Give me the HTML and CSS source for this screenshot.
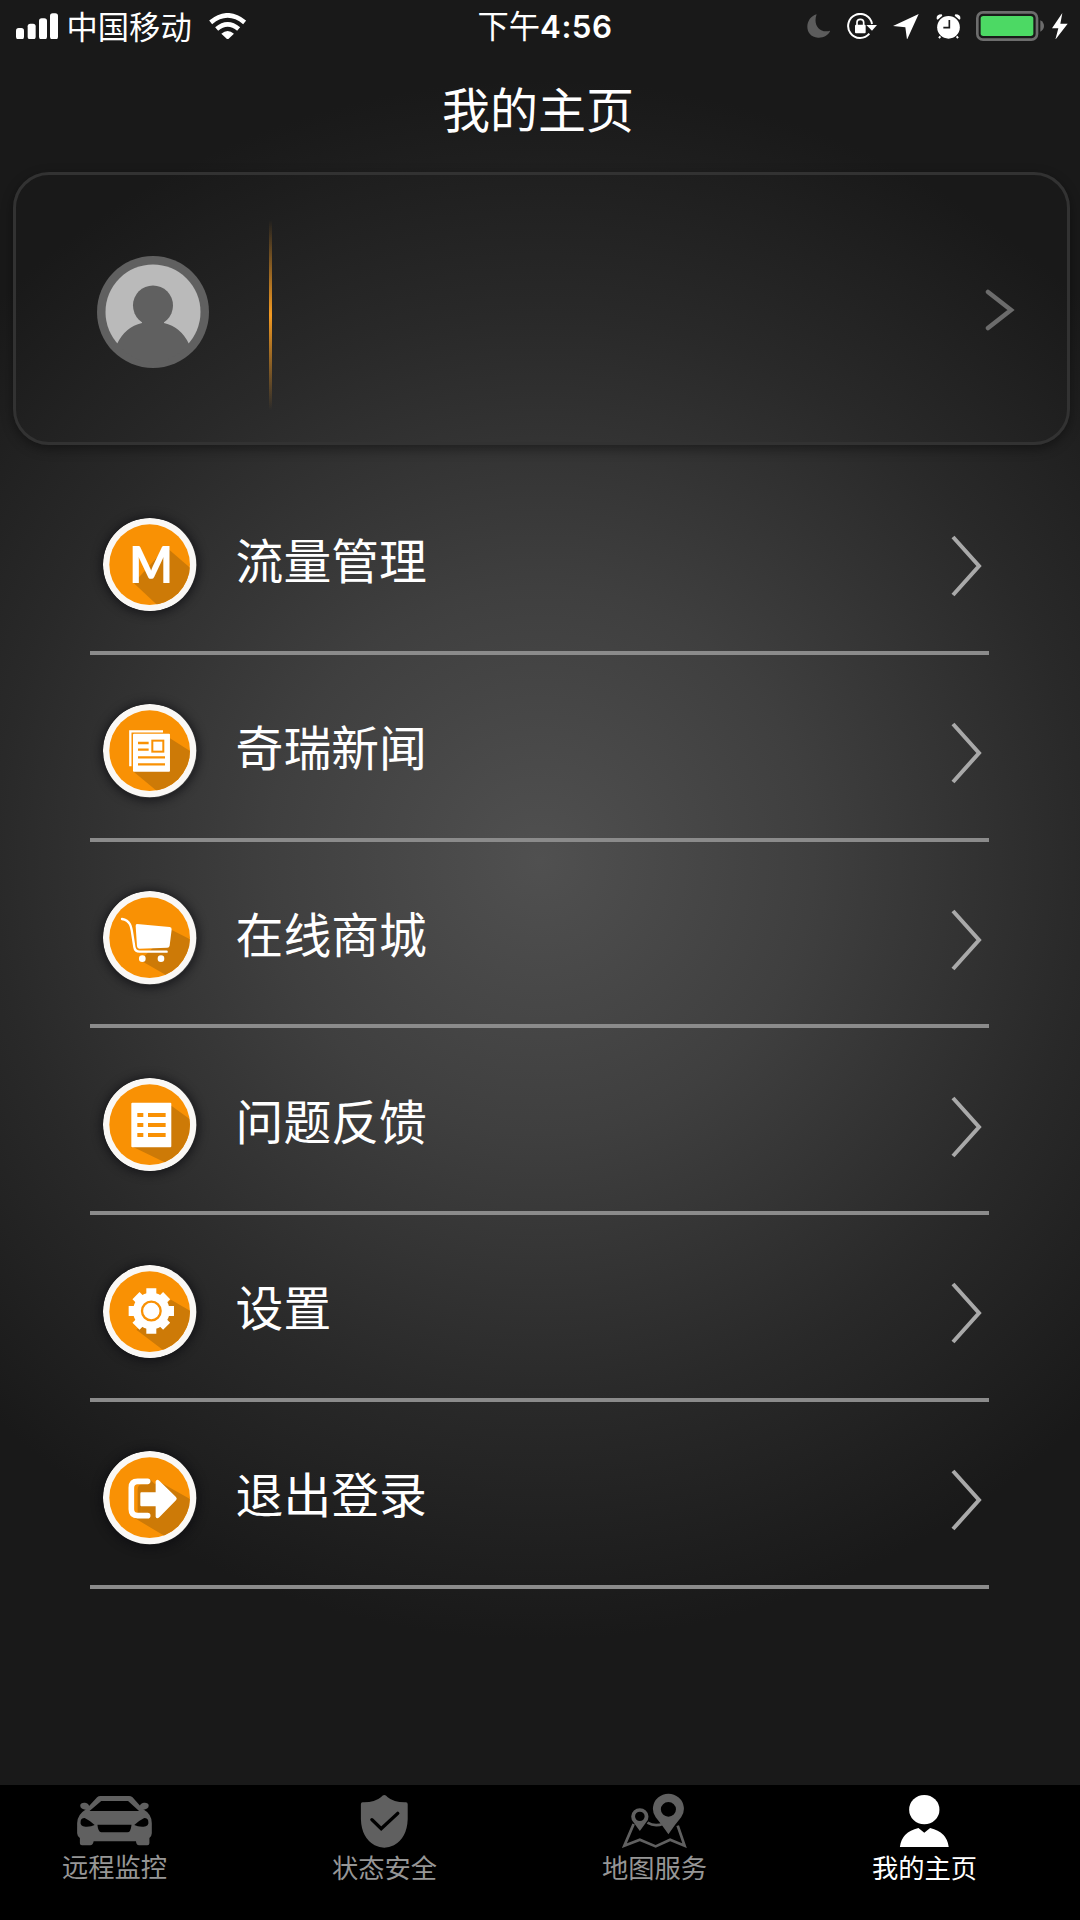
FILE: index.html
```
<!DOCTYPE html>
<html lang="zh-CN">
<head>
    <meta charset="UTF-8">
    <title>我的主页</title>
    <link rel="stylesheet" href="styles.css">
</head>
<body>
    <div class="page">
        <div class="status">
            <div class="status_left">
                <svg class="signal" viewBox="0 0 126 80" fill="#fff">
                    <rect x="0" y="45" width="24" height="34" rx="8"/>
                    <rect x="35" y="32" width="24" height="47" rx="8"/>
                    <rect x="69" y="16" width="24" height="63" rx="8"/>
                    <rect x="102" y="1" width="24" height="78" rx="8"/>
                </svg>
                <span class="carrier">中国移动</span>
                <svg class="wifi" viewBox="0 0 112 80" fill="none" stroke="#fff" stroke-width="14">
                    <path d="M5 28Q56 -14 107 28"/>
                    <path d="M23 48Q56 20 89 48"/>
                    <path d="M56 80L37 62Q56 46 75 62Z" fill="#fff" stroke="none"/>
                </svg>
            </div>
            <div class="time">下午<b>4:56</b></div>
            <div class="status_right">
                <svg class="moon" viewBox="0 0 70 80">
                    <path d="M29 4C-8 14 -10 72 33 74C50 75 64 67 70 53C38 62 17 35 29 4Z" fill="#5c5c5c"/>
                </svg>
                <svg class="lock" viewBox="0 0 90 80">
                    <path d="M67 62A36 36 0 1 1 75 33" fill="none" stroke="#fff" stroke-width="6"/>
                    <path d="M58 36H90L75 53Z" fill="#fff"/>
                    <rect x="24" y="35" width="32" height="26" rx="3" fill="#fff"/>
                    <path d="M30 36V28Q30 19 40 19Q50 19 50 28V36" fill="none" stroke="#fff" stroke-width="5"/>
                </svg>
                <svg class="arrow" viewBox="0 0 77 80">
                    <path d="M77 3L0 39L37 43L42 80Z" fill="#fff"/>
                </svg>
                <svg class="alarm" viewBox="0 0 75 80">
                    <path d="M2 18Q0 4 17 4L19 8L5 20ZM73 18Q75 4 58 4L56 8L70 20Z" fill="#fff"/>
                    <circle cx="37.500" cy="43" r="34" fill="#fff"/>
                    <path d="M40 21V44H22" fill="none" stroke="#1a1a1a" stroke-width="5"/>
                    <path d="M13 70L9 75M62 70L66 75" stroke="#fff" stroke-width="6"/>
                </svg>
                <svg class="battery" viewBox="0 0 204 90">
                    <rect x="4" y="4" width="179" height="82" rx="17" fill="none" stroke="#6d6d6d" stroke-width="8"/>
                    <rect x="14" y="15" width="158" height="60" rx="8" fill="#4cd964"/>
                    <path d="M193 28Q204 34 204 45Q204 56 193 62Z" fill="#6d6d6d"/>
                </svg>
                <svg class="bolt" viewBox="0 0 47 80">
                    <path d="M31 0L0 46H19L10 80L47 32H25Z" fill="#fff"/>
                </svg>
            </div>
        </div>

        <h1 class="title">我的主页</h1>

        <div class="card">
            <svg class="avatar" viewBox="0 0 112 112">
                <circle cx="56" cy="56" r="56" fill="#606060"/>
                <circle cx="56" cy="56" r="47.500" fill="#bababa"/>
                <circle cx="56" cy="49.500" r="20" fill="#606060"/>
                <path d="M20 88Q28 71 45 67V60H67V67Q84 71 92 88Q76 106 56 106Q36 106 20 88Z" fill="#606060"/>
            </svg>
            <i class="card_line"></i>
            <svg class="card_more" viewBox="0 0 30 42">
                <path d="M3 3L26 21L3 39" fill="none" stroke="#6c6c6c" stroke-width="4.500" stroke-linecap="round"/>
            </svg>
        </div>

        <ul class="menu">
            <li>
                <svg class="icon" viewBox="0 0 280 280">
                    <defs>
                        <clipPath id="disc"><circle cx="140" cy="140" r="121"/></clipPath>
                    </defs>
                    <circle cx="140" cy="140" r="140" fill="#faf8f5"/>
                    <circle cx="140" cy="140" r="121" fill="#f99104"/>
                    <path d="M190 88L290 174L230 300L170 268L92 195Z" fill="#cd7a07" clip-path="url(#disc)"/>
                    <text class="letter" x="79" y="194" textLength="131" lengthAdjust="spacingAndGlyphs">M</text>
                </svg>
                <span>流量管理</span>
                <svg class="more" viewBox="0 0 32 62"><path d="M2 2L28 31L2 60"/></svg>
            </li>
            <li>
                <svg class="icon" viewBox="0 0 280 280">
                    <circle cx="140" cy="140" r="140" fill="#faf8f5"/>
                    <circle cx="140" cy="140" r="121" fill="#f99104"/>
                    <path d="M201 103L280 153L230 300L170 268L92 203Z" fill="#cd7a07" clip-path="url(#disc)"/>
                    <path d="M82 187V82H180" fill="none" stroke="#fff" stroke-width="7"/>
                    <rect x="90" y="89" width="111" height="114" rx="3" fill="#fff"/>
                    <path d="M105 117H137M105 137H137M105 160H186M105 181H186" stroke="#f99104" stroke-width="7"/>
                    <rect x="148" y="110" width="33" height="33" fill="#fff" stroke="#f99104" stroke-width="6"/>
                </svg>
                <span>奇瑞新闻</span>
                <svg class="more" viewBox="0 0 32 62"><path d="M2 2L28 31L2 60"/></svg>
            </li>
            <li>
                <svg class="icon" viewBox="0 0 280 280">
                    <circle cx="140" cy="140" r="140" fill="#faf8f5"/>
                    <circle cx="140" cy="140" r="121" fill="#f99104"/>
                    <path d="M205 116L280 155L230 300L190 253L112 208Z" fill="#cd7a07" clip-path="url(#disc)"/>
                    <path d="M57 84C82 88 85 107 88 129L94 168Q96 182 110 182H191" fill="none" stroke="#fff" stroke-width="7" stroke-linecap="round"/>
                    <path d="M102 99Q150 104 200 108Q207 109 206 116L200 164Q199 170 193 170L109 173Q103 173 102 166L98 105Q98 99 102 99Z" fill="#fff"/>
                    <circle cx="118" cy="203" r="10" fill="#fff"/>
                    <circle cx="174" cy="203" r="10" fill="#fff"/>
                </svg>
                <span>在线商城</span>
                <svg class="more" viewBox="0 0 32 62"><path d="M2 2L28 31L2 60"/></svg>
            </li>
            <li>
                <svg class="icon" viewBox="0 0 280 280">
                    <circle cx="140" cy="140" r="140" fill="#faf8f5"/>
                    <circle cx="140" cy="140" r="121" fill="#f99104"/>
                    <path d="M205 83L290 145L230 300L185 253L92 208Z" fill="#cd7a07" clip-path="url(#disc)"/>
                    <rect x="85" y="74" width="120" height="134" rx="3" fill="#fff"/>
                    <path d="M103 111H121M103 141H121M103 171H121M135 111H188M135 141H188M135 171H188" stroke="#f99104" stroke-width="12"/>
                </svg>
                <span>问题反馈</span>
                <svg class="more" viewBox="0 0 32 62"><path d="M2 2L28 31L2 60"/></svg>
            </li>
            <li>
                <svg class="icon" viewBox="0 0 280 280">
                    <circle cx="140" cy="140" r="140" fill="#faf8f5"/>
                    <circle cx="140" cy="140" r="121" fill="#f99104"/>
                    <path d="M204 104L280 148L230 300L180 255L100 194Z" fill="#cd7a07" clip-path="url(#disc)"/>
                    <circle cx="145" cy="138" r="55" fill="#fff"/>
                    <path d="M145 70V206M77 138H213M99 92L191 184M99 184L191 92" stroke="#fff" stroke-width="30"/>
                    <circle cx="145" cy="138" r="28" fill="#fff" stroke="#f99104" stroke-width="7"/>
                </svg>
                <span>设置</span>
                <svg class="more" viewBox="0 0 32 62"><path d="M2 2L28 31L2 60"/></svg>
            </li>
            <li>
                <svg class="icon" viewBox="0 0 280 280">
                    <circle cx="140" cy="140" r="140" fill="#faf8f5"/>
                    <circle cx="140" cy="140" r="121" fill="#f99104"/>
                    <path d="M165 90L290 160L230 300L180 252L96 202V186H112V108L140 84L156 100Z" fill="#cd7a07" clip-path="url(#disc)"/>
                    <path d="M93 99H136V122H115V186H93Z" fill="#f99104"/>
                    <path d="M141 100H120Q104 100 104 116V186H116V122H141Z" fill="#cd7a07"/>
                    <path d="M134 91H104Q85 91 85 110V175Q85 194 104 194H134" fill="none" stroke="#fff" stroke-width="17" stroke-linecap="round"/>
                    <path d="M115 124H158V91Q161 83 169 89L219 138Q224 143 219 148L169 199Q161 205 158 197V166H115Q112 166 112 162V128Q112 124 115 124Z" fill="#fff"/>
                </svg>
                <span>退出登录</span>
                <svg class="more" viewBox="0 0 32 62"><path d="M2 2L28 31L2 60"/></svg>
            </li>
        </ul>

        <div class="tabs">
            <div class="tab first">
                <svg viewBox="0 0 240 170" preserveAspectRatio="none" fill="#606060">
                    <path fill-rule="evenodd" d="M80 12H163Q168 12 173 16L204 52Q229 66 229 94V124Q229 132 222 138V154Q222 160 216 160H192Q184 160 183 148H60Q58 160 50 160H26Q20 160 20 154V138Q12 132 12 124V94Q12 68 38 52L70 16Q74 12 80 12ZM82 27H160L192 57H48ZM22 90Q20 102 36 104Q52 105 63 99Q50 86 34 78Q22 78 22 90ZM219 90Q221 102 205 104Q189 105 178 99Q191 86 207 78Q219 78 219 90ZM71 98H170Q168 121 158 121H82Q73 120 71 98Z"/>
                    <path d="M21 40Q22 31 35 32Q47 33 48 47L42 54Q20 53 21 40ZM220 40Q219 31 206 32Q194 33 193 47L199 54Q221 53 220 40Z"/>
                </svg>
                <span>远程监控</span>
            </div>
            <div class="tab">
                <svg viewBox="0 0 240 170" preserveAspectRatio="none">
                    <path d="M120 9Q124 9 130 16Q148 32 183 31Q188 31 188 37V82Q186 138 148 160Q120 174 92 160Q54 138 52 82V37Q52 31 57 31Q92 32 110 16Q116 9 120 9Z" fill="#606060"/>
                    <path d="M84 83L111 110L159 64" fill="none" stroke="#000" stroke-width="10" stroke-linecap="round"/>
                </svg>
                <span>状态安全</span>
            </div>
            <div class="tab">
                <svg viewBox="0 0 240 170" preserveAspectRatio="none">
                    <path d="M60 96L33 161L78 143L124 163L166 143L208 161L188 101M100 92Q122 105 146 95" fill="none" stroke="#606060" stroke-width="8"/>
                    <path fill-rule="evenodd" d="M161 127Q142 98 124 76A45 45 0 1 1 198 76Q180 98 161 127ZM161 30A22 22 0 1 0 161 74A22 22 0 1 0 161 30ZM78 117L59 90A25 25 0 1 1 97 90ZM78 59A14 14 0 1 0 78 87A14 14 0 1 0 78 59Z" fill="#606060"/>
                </svg>
                <span>地图服务</span>
            </div>
            <div class="tab on">
                <svg viewBox="0 0 240 170" preserveAspectRatio="none" fill="#fff">
                    <circle cx="120" cy="53" r="44"/>
                    <path d="M49 165Q54 120 103 108L120 122L137 108Q186 120 191 165Z"/>
                </svg>
                <span>我的主页</span>
            </div>
        </div>
    </div>
</body>
</html>
```
FILE: styles.css
```
*{
    margin:0;
    padding:0;
    box-sizing: border-box;
}
ul,li{
    list-style: none;
}
svg{
    display: block;
    flex:none;
}
body{
    font-family: "Noto Sans CJK SC",sans-serif;
    font-weight: 400;
    color:#fff;
    background:#191919;
}
.page{
    display: flex;
    flex-direction: column;
    width:1080px;
    height:1920px;
    overflow: hidden;
    background:radial-gradient(circle 780px at 540px 860px,#505050 0%,#3f3f3f 35%,#292929 70%,#191919 100%);
}

/* 状态栏 */
.status{
    display: grid;
    grid-template-columns: 1fr auto 1fr;
    align-items: center;
    height:52px;
    padding:0 12.5px 0 15.5px;
    font-size:31.3px;
    line-height: 50px;
}
.status_left,.status_right{
    display: flex;
    align-items: center;
}
.status_right{
    justify-content: flex-end;
}
.signal{
    width:42px;
    height:26.7px;
}
.carrier{
    margin:0 17px 0 9px;
}
.wifi{
    width:37.3px;
    height:26.7px;
}
.time{
    padding-left:7px;
}
.time b{
    font-family: Inter,sans-serif;
    font-weight: 600;
    letter-spacing: .5px;
}
.moon,.lock,.arrow,.alarm,.bolt{
    height:26.7px;
}
.moon{
    width:23.3px;
}
.lock{
    width:30px;
    margin-left:17px;
}
.arrow{
    width:25.7px;
    margin-left:16px;
}
.alarm{
    width:25px;
    margin-left:17px;
}
.battery{
    width:68px;
    height:30px;
    margin-left:15px;
}
.bolt{
    width:15.7px;
    margin-left:8px;
}

.title{
    height:120px;
    padding-right:4px;
    font-size:48px;
    font-weight: 400;
    line-height: 110px;
    text-align: center;
}

/* 用户卡片 */
.card{
    display: flex;
    align-items: center;
    height:273px;
    margin:0 10px 0 13px;
    padding:0 52px 0 81px;
    border:3px solid #323232;
    border-radius: 36px;
    box-shadow: 0 4px 12px rgba(0,0,0,.4);
}
.avatar{
    width:112px;
    height:112px;
    margin-top:7px;
}
.card_line{
    width:3px;
    height:190px;
    margin:13px 0 0 60px;
    background:linear-gradient(rgba(249,150,20,0),#f39a22 50%,rgba(249,150,20,0));
}
.card_more{
    width:30px;
    height:42px;
    margin:3px 0 0 auto;
}

/* 菜单列表 */
.menu{
    margin:23px 91px 0 90px;
}
.menu li{
    display: flex;
    align-items: center;
    height:186.75px;
    padding:10px 6px 0 13.3px;
    border-bottom:4px solid #8b8b8b;
}
.menu span{
    margin:0 auto 10px 39px;
    font-size:47.8px;
    line-height: 60px;
}
.icon{
    width:93.3px;
    height:93.3px;
    border-radius: 50%;
    box-shadow: 0 1px 10px 2px rgba(10,10,15,.65);
}
.letter{
    font-family: Lato,sans-serif;
    font-size:152px;
    font-weight: 900;
    fill:#fff;
}
.more{
    width:32px;
    height:62px;
    margin-top:4px;
    fill:none;
    stroke:#a9a9a9;
    stroke-width: 4;
}

/* 底部导航 */
.tabs{
    display: flex;
    height:135.5px;
    margin-top:auto;
    background:#000;
}
.tab{
    flex:1;
    display: flex;
    flex-direction: column;
    align-items: center;
    padding:7.2px 41px 0 0;
    color:#969696;
}
.tab svg{
    width:82.6px;
    height:56.7px;
}
.tab span{
    font-size:26.3px;
    line-height: 40px;
    margin-top:-1px;
}
.tab.first span{
    margin-top:-2px;
}
.tab.on{
    color:#fff;
}
```
